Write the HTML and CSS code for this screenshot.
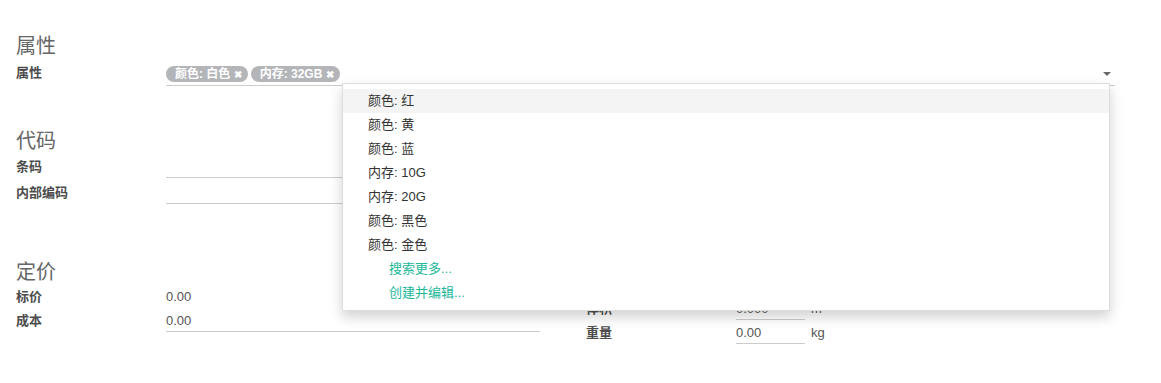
FILE: index.html
```html
<!DOCTYPE html>
<html lang="zh">
<head>
  <meta charset="UTF-8">
  <title>产品</title>
  <link rel="stylesheet" href="styles.css">
</head>
<body>
  <div class="sheet">
    <section class="group">
      <h2>属性</h2>
      <div class="row">
        <label>属性</label>
        <div class="field tags-field">
          <span class="tag">颜色: 白色 <b>✖</b></span>
          <span class="tag">内存: 32GB <b>✖</b></span>
          <span class="caret"></span>
        </div>
      </div>
    </section>

    <section class="group codes">
      <h2>代码</h2>
      <div class="row">
        <label>条码</label>
        <div class="field input"></div>
      </div>
      <div class="row">
        <label>内部编码</label>
        <div class="field input"></div>
      </div>
    </section>

    <div class="columns">
      <section class="group pricing">
        <h2>定价</h2>
        <div class="row tight">
          <label>标价</label>
          <div class="field readonly">0.00</div>
        </div>
        <div class="row tight">
          <label>成本</label>
          <div class="field input">0.00</div>
        </div>
      </section>
      <section class="group logistics">
        <div class="row tight">
          <label>体积</label>
          <div class="field small input">0.000</div>
          <span class="unit">m³</span>
        </div>
        <div class="row tight">
          <label>重量</label>
          <div class="field small input">0.00</div>
          <span class="unit">kg</span>
        </div>
      </section>
    </div>

    <ul class="dropdown">
      <li class="active">颜色: 红</li>
      <li>颜色: 黄</li>
      <li>颜色: 蓝</li>
      <li>内存: 10G</li>
      <li>内存: 20G</li>
      <li>颜色: 黑色</li>
      <li>颜色: 金色</li>
      <li class="link">搜索更多...</li>
      <li class="link">创建并编辑...</li>
    </ul>
  </div>
</body>
</html>
```

FILE: styles.css
```css
html, body {
  margin: 0;
  padding: 0;
  background: #fff;
}

body {
  font-family: 'Liberation Sans', 'Noto Sans CJK SC', sans-serif;
  font-size: 13px;
  color: #4c4c4c;
}

.sheet {
  position: relative;
  padding: 34px 16px 0;
  width: 1161px;
  box-sizing: border-box;
}

h2 {
  margin: 0;
  font-size: 20px;
  font-weight: normal;
  line-height: 24px;
  color: #666;
}

.row {
  display: flex;
  align-items: flex-start;
}

.row label {
  width: 150px;
  flex: none;
  font-weight: bold;
  line-height: 20px;
}

.group > h2 + .row {
  margin-top: 5px;
}

.tags-field {
  position: relative;
  width: 949px;
  height: 22px;
  border-bottom: 1px solid #ccc;
  display: flex;
  align-items: center;
  gap: 3px;
}

.tag {
  background: #b3b5b8;
  color: #fff;
  font-weight: bold;
  font-size: 12px;
  line-height: 16px;
  height: 16px;
  padding: 0 6px 0 9px;
  border-radius: 8px;
}

.tag b {
  font-size: 10px;
}

.caret {
  position: absolute;
  right: 4px;
  top: 9px;
  border-left: 4px solid transparent;
  border-right: 4px solid transparent;
  border-top: 4px solid #666;
}

.codes {
  margin-top: 43px;
}

.codes .row {
  height: 26px;
}

.codes .row:first-of-type {
  margin-top: 4px;
}

.input {
  border-bottom: 1px solid #ccc;
  height: 20px;
  line-height: 20px;
}

.codes .input {
  width: 374px;
}

.columns {
  display: flex;
  margin-top: 51px;
}

.pricing {
  width: 570px;
}

.pricing .row:first-of-type {
  margin-top: 3px;
}

.tight {
  height: 24px;
}

.readonly {
  line-height: 20px;
}

.pricing .field {
  width: 374px;
  color: #555;
}

.logistics {
  padding-top: 39px;
}

.field.small {
  width: 69px;
  color: #555;
}

.unit {
  margin-left: 6px;
  line-height: 20px;
  color: #555;
}

.dropdown {
  position: absolute;
  left: 342px;
  top: 83px;
  width: 768px;
  margin: 0;
  padding: 5px 0;
  list-style: none;
  background: #fff;
  border: 1px solid #ddd;
  box-sizing: border-box;
  box-shadow: 0 6px 12px rgba(0, 0, 0, 0.18);
}

.dropdown li {
  height: 24px;
  line-height: 24px;
  padding-left: 25px;
  color: #333;
}

.dropdown li.active {
  background: #f4f4f4;
}

.dropdown li.link {
  padding-left: 46px;
  color: #21b799;
}
```
